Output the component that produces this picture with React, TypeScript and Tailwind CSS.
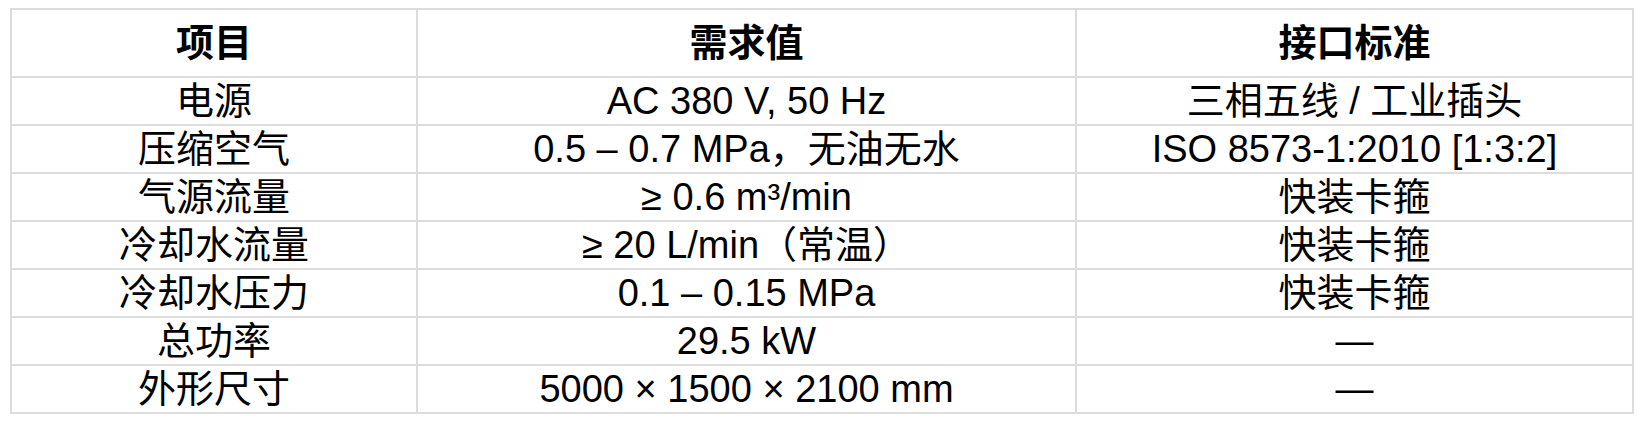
const rows = [
  { item: "电源", value: "AC 380 V, 50 Hz", standard: "三相五线 / 工业插头" },
  { item: "压缩空气", value: "0.5 – 0.7 MPa，无油无水", standard: "ISO 8573-1:2010 [1:3:2]" },
  { item: "气源流量", value: "≥ 0.6 m³/min", standard: "快装卡箍" },
  { item: "冷却水流量", value: "≥ 20 L/min（常温）", standard: "快装卡箍" },
  { item: "冷却水压力", value: "0.1 – 0.15 MPa", standard: "快装卡箍" },
  { item: "总功率", value: "29.5 kW", standard: "—" },
  { item: "外形尺寸", value: "5000 × 1500 × 2100 mm", standard: "—" },
];

const App = () => {
  return (
    <div className="w-[1644px] h-[426px] bg-white pt-[8px] pl-[10px] font-['Liberation_Sans','Noto_Sans_CJK_SC',sans-serif] text-black">
      <table className="table-fixed w-[1624px] border-separate border-spacing-0 border-l-2 border-t-2 border-[#dcdcdc]">
        <thead>
          <tr>
            <th className="w-[406px] h-[68px] p-0 border-r-2 border-b-2 border-[#dcdcdc] text-[38px] font-bold leading-[66px] text-center">
              项目
            </th>
            <th className="w-[659px] h-[68px] p-0 border-r-2 border-b-2 border-[#dcdcdc] text-[38px] font-bold leading-[66px] text-center">
              需求值
            </th>
            <th className="w-[557px] h-[68px] p-0 border-r-2 border-b-2 border-[#dcdcdc] text-[38px] font-bold leading-[66px] text-center">
              接口标准
            </th>
          </tr>
        </thead>
        <tbody>
          {rows.map((row, i) => (
            <tr key={i}>
              <td className="h-[48px] p-0 border-r-2 border-b-2 border-[#dcdcdc] text-[38px] leading-[46px] text-center whitespace-nowrap">
                {row.item}
              </td>
              <td className="h-[48px] p-0 border-r-2 border-b-2 border-[#dcdcdc] text-[38px] leading-[46px] text-center whitespace-nowrap">
                {row.value}
              </td>
              <td className="h-[48px] p-0 border-r-2 border-b-2 border-[#dcdcdc] text-[38px] leading-[46px] text-center whitespace-nowrap">
                {row.standard}
              </td>
            </tr>
          ))}
        </tbody>
      </table>
    </div>
  );
};

export default App;
